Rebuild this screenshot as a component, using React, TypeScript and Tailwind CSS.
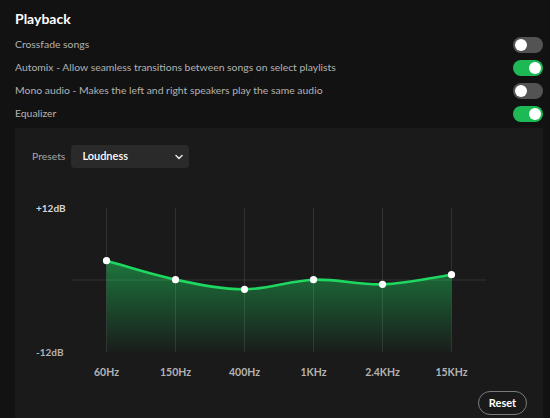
import { useMemo } from 'react';

const FREQS = ['60Hz', '150Hz', '400Hz', '1KHz', '2.4KHz', '15KHz'];
// band positions, px from top of the plot (144px tall, 0dB at 72)
const BANDS = [52.7, 71.7, 81.3, 71.7, 76.3, 66.7];

const COL = 69;
const PAD = 6;
const PLOT_H = 144;

function Toggle({ on }: { on: boolean }) {
  return (
    <div
      className={`flex h-[16px] w-[30px] items-center rounded-full px-[2px] ${
        on ? 'justify-end bg-[#1db954]' : 'justify-start bg-[#535353]'
      }`}
    >
      <div className="h-[12px] w-[12px] rounded-full bg-white" />
    </div>
  );
}

function buildCurve(pts: [number, number][]) {
  let d = `M ${pts[0][0]} ${pts[0][1]}`;
  for (let i = 0; i < pts.length - 1; i++) {
    const p0 = pts[i - 1] ?? pts[i];
    const p1 = pts[i];
    const p2 = pts[i + 1];
    const p3 = pts[i + 2] ?? p2;
    const c1x = p1[0] + (p2[0] - p0[0]) / 6;
    const c1y = p1[1] + (p2[1] - p0[1]) / 6;
    const c2x = p2[0] - (p3[0] - p1[0]) / 6;
    const c2y = p2[1] - (p3[1] - p1[1]) / 6;
    d += ` C ${c1x} ${c1y} ${c2x} ${c2y} ${p2[0]} ${p2[1]}`;
  }
  return d;
}

function EqGraph() {
  const pts = useMemo(
    () => BANDS.map((y, i) => [COL / 2 + COL * i, PAD + y] as [number, number]),
    []
  );
  const curve = buildCurve(pts);
  const bottom = PAD + PLOT_H;
  const fill = `${curve} L ${pts[pts.length - 1][0]} ${bottom} L ${pts[0][0]} ${bottom} Z`;
  const w = COL * FREQS.length;

  return (
    <svg width={w} height={PLOT_H + PAD * 2} className="block overflow-visible">
      <defs>
        <linearGradient id="eqFill" gradientUnits="userSpaceOnUse" x1="0" y1="55" x2="0" y2={bottom}>
          <stop offset="0" stopColor="#1db954" stopOpacity="0.6" />
          <stop offset="1" stopColor="#1db954" stopOpacity="0.02" />
        </linearGradient>
      </defs>
      <path d={fill} fill="url(#eqFill)" />
      <line x1="0" x2={w} y1={PAD + PLOT_H / 2} y2={PAD + PLOT_H / 2} stroke="#ffffff" strokeOpacity="0.1" />
      {pts.map(([x]) => (
        <line key={x} x1={x} x2={x} y1={PAD} y2={bottom} stroke="#ffffff" strokeOpacity="0.1" />
      ))}
      <path d={curve} fill="none" stroke="#1ed760" strokeWidth="2.6" strokeLinecap="round" />
      {pts.map(([x, y]) => (
        <circle key={x} cx={x} cy={y} r="3.6" fill="#ffffff" />
      ))}
    </svg>
  );
}

export default function App() {
  const rows = [
    { label: 'Crossfade songs', on: false },
    { label: 'Automix - Allow seamless transitions between songs on select playlists', on: true },
    { label: 'Mono audio - Makes the left and right speakers play the same audio', on: false },
    { label: 'Equalizer', on: true },
  ];

  return (
    <div className="min-h-[418px] w-[550px] overflow-hidden bg-[#121212] pl-[15px] pr-[7px] font-['Lato','Liberation_Sans',sans-serif]">
      {/* header */}
      <div className="flex h-[33px] items-center pt-[4px]">
        <h2 className="text-[14px] font-bold text-white">Playback</h2>
      </div>

      {/* toggles */}
      {rows.map(row => (
        <div key={row.label} className="flex h-[23px] items-center justify-between">
          <span className="text-[10.4px] text-[#b3b3b3]">{row.label}</span>
          <Toggle on={row.on} />
        </div>
      ))}

      {/* equalizer panel */}
      <div className="mt-[3px] h-[290px] bg-[#1a1a1a] pl-[17px] pr-[16px] pt-[17px]">
        <div className="flex items-center gap-[6px]">
          <span className="text-[10.4px] text-[#a7a7a7]">Presets</span>
          <div className="flex h-[23px] w-[118px] items-center justify-between rounded-[4px] bg-[#2a2a2a] pl-[11px] pr-[6px]">
            <span className="text-[11px] font-semibold text-white">Loudness</span>
            <svg width="8" height="6" viewBox="0 0 8 6">
              <path d="M1 1.5 L4 4.5 L7 1.5" fill="none" stroke="#e0e0e0" strokeWidth="1.6" strokeLinecap="round" strokeLinejoin="round" />
            </svg>
          </div>
        </div>

        <div className="mt-[34px] flex">
          <div className="flex w-[40px] flex-col justify-between pl-[4px] text-[10px] font-bold leading-[12px]">
            <span className="text-[#d6d6d6]">+12dB</span>
            <span className="text-[#b3b3b3]">-12dB</span>
          </div>
          <EqGraph />
        </div>

        <div className="ml-[40px] mt-[8px] flex">
          {FREQS.map(f => (
            <span key={f} className="w-[69px] text-center text-[10.5px] font-bold leading-[12px] text-[#b3b3b3]">
              {f}
            </span>
          ))}
        </div>

        <div className="mt-[13px] flex justify-end">
          <button className="h-[24px] w-[49px] rounded-full border border-[#7c7c7c] text-[11px] font-bold text-white">
            Reset
          </button>
        </div>
      </div>
    </div>
  );
}
